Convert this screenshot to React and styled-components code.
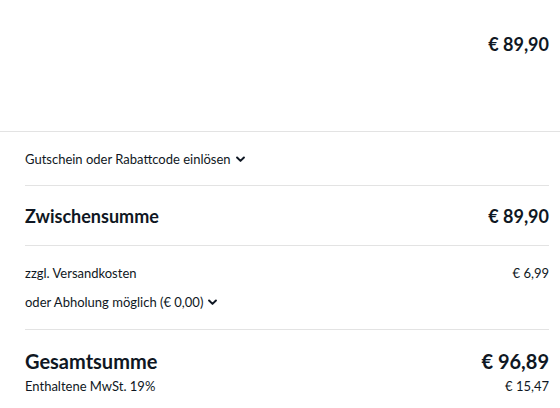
import styled, { createGlobalStyle } from 'styled-components';

const GlobalStyle = createGlobalStyle`
    body {
        margin: 0;
        background: #ffffff;
        font-family: Lato, "Open Sans", sans-serif;
        color: #0f1723;
    }
`;

const Page = styled.div`
    width: 560px;
`;

const ItemArea = styled.section`
    height: 132px;
    display: flex;
    justify-content: flex-end;
    padding: 33px 11px 0 0;
    box-sizing: border-box;
    border-bottom: 1px solid #e3e3e3;
`;

const ItemPrice = styled.span`
    font-size: 18px;
    font-weight: 700;
    line-height: 22px;
`;

const Summary = styled.div`
    padding: 0 11px 0 25px;
`;

const Block = styled.div`
    padding: ${(p) => p.$pad || '0'};
    border-bottom: ${(p) => (p.$last ? 'none' : '1px solid #e3e3e3')};
    display: flex;
    flex-direction: column;
    gap: ${(p) => p.$gap || '0'};
`;

const Row = styled.div`
    display: flex;
    justify-content: space-between;
    align-items: center;
`;

const Toggle = styled.button`
    display: inline-flex;
    align-items: center;
    gap: 5px;
    background: none;
    border: none;
    padding: 0;
    font: inherit;
    font-size: 13px;
    line-height: 18px;
    color: inherit;
    cursor: pointer;
`;

const Label = styled.span`
    font-size: ${(p) => p.$size || '13px'};
    font-weight: ${(p) => (p.$bold ? 700 : 400)};
    line-height: 1.3;
`;

const Amount = styled.span`
    font-size: ${(p) => p.$size || '13px'};
    font-weight: ${(p) => (p.$bold ? 700 : 400)};
    line-height: 1.3;
`;

const Chevron = () => (
    <svg width="9" height="7" viewBox="0 0 10 7" aria-hidden="true">
        <path d="M1.2 1.2 L5 5 L8.8 1.2" fill="none" stroke="currentColor" strokeWidth="2.2" strokeLinecap="round" strokeLinejoin="round" />
    </svg>
);

const App = () => {
    return (
        <Page>
            <GlobalStyle />
            <ItemArea>
                <ItemPrice>€ 89,90</ItemPrice>
            </ItemArea>
            <Summary>
                <Block $pad="18px 0 17px">
                    <Row>
                        <Toggle>Gutschein oder Rabattcode einlösen <Chevron /></Toggle>
                    </Row>
                </Block>
                <Block $pad="19px 0 17px">
                    <Row>
                        <Label $size="18px" $bold>Zwischensumme</Label>
                        <Amount $size="18px" $bold>€ 89,90</Amount>
                    </Row>
                </Block>
                <Block $pad="19px 0 18px" $gap="11px">
                    <Row>
                        <Label>zzgl. Versandkosten</Label>
                        <Amount>€ 6,99</Amount>
                    </Row>
                    <Row>
                        <Toggle>oder Abholung möglich (€ 0,00) <Chevron /></Toggle>
                    </Row>
                </Block>
                <Block $pad="18px 0 0" $gap="4px" $last>
                    <Row>
                        <Label $size="20px" $bold>Gesamtsumme</Label>
                        <Amount $size="20px" $bold>€ 96,89</Amount>
                    </Row>
                    <Row>
                        <Label>Enthaltene MwSt. 19%</Label>
                        <Amount>€ 15,47</Amount>
                    </Row>
                </Block>
            </Summary>
        </Page>
    );
};

export default App;
